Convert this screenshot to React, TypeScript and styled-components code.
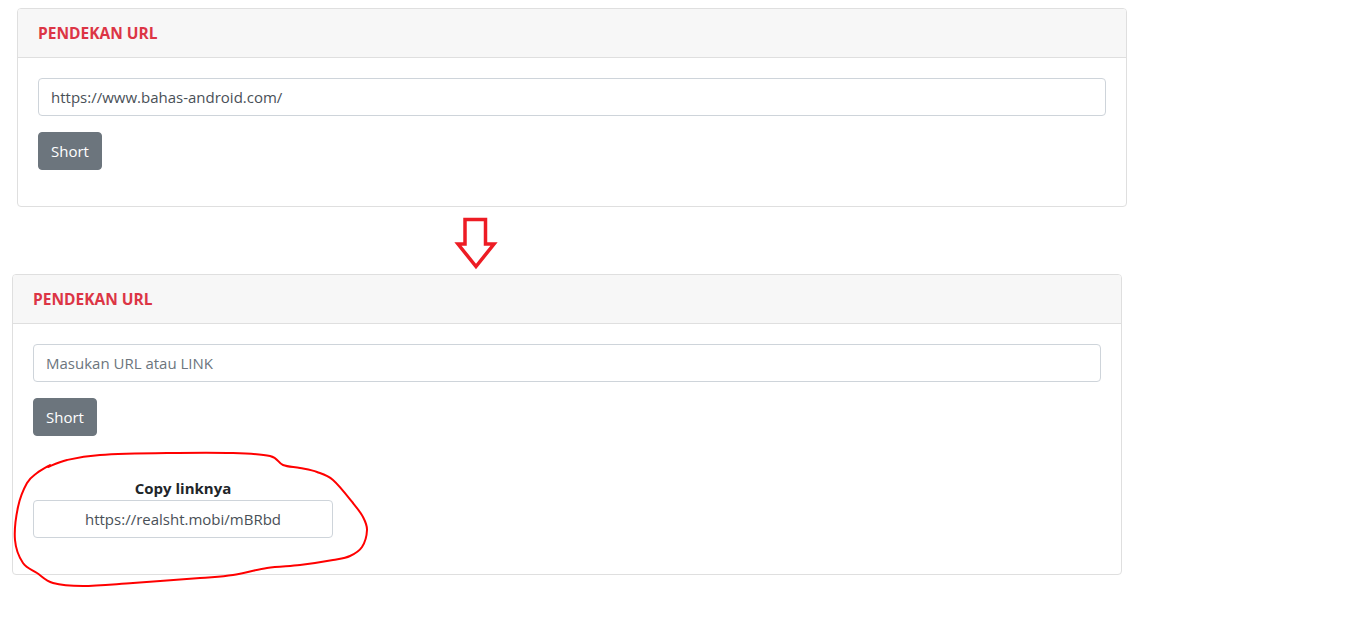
import React from "react";
import styled, { createGlobalStyle } from "styled-components";

const Global = createGlobalStyle`
  html, body { margin: 0; padding: 0; background: #fff; }
  body { font-family: "Open Sans", "Noto Sans", Arial, sans-serif; font-size: 15px; line-height: 1.5; color: #212529; }
  * { box-sizing: border-box; }
`;

const Page = styled.div`
  padding: 8px;
  min-height: 100vh;
  display: flex;
  flex-direction: column;
  align-items: flex-start;
`;

const Card = styled.div<{ $offset: number }>`
  margin-left: ${(p) => p.$offset}px;
  width: 1110px;
  border: 1px solid #dfdfdf;
  border-radius: 4px;
  background: #fff;
  display: flex;
  flex-direction: column;
`;

const CardHeader = styled.div`
  background: #f7f7f7;
  border-bottom: 1px solid #dfdfdf;
  padding: 12px 20px;
  border-radius: 3px 3px 0 0;
`;

const Title = styled.h6`
  margin: 0;
  font-size: 15.5px;
  line-height: 24px;
  font-weight: 700;
  color: #dc3545;
`;

const CardBody = styled.div`
  padding: 20px;
  display: flex;
  flex-direction: column;
  align-items: flex-start;
`;

const Input = styled.input<{ $w?: string; $center?: boolean }>`
  width: ${(p) => p.$w || "100%"};
  height: 38px;
  padding: 6px 12px;
  font: inherit;
  font-size: 15px;
  color: #495057;
  border: 1px solid #ced4da;
  border-radius: 4px;
  background: #fff;
  outline: none;
  text-align: ${(p) => (p.$center ? "center" : "left")};
  &::placeholder { color: #6c757d; opacity: 1; }
`;

const Button = styled.button`
  margin-top: 16px;
  margin-bottom: 16px;
  height: 38px;
  padding: 6px 12px;
  font: inherit;
  font-size: 15px;
  color: #fff;
  background: #6c757d;
  border: 1px solid #6c757d;
  border-radius: 4px;
`;

const ArrowRow = styled.div`
  margin: 9px 0 4px 446px;
  height: 54px;
  display: flex;
`;

const CopyBox = styled.div`
  position: relative;
  margin-top: 24px;
  margin-bottom: 16px;
  width: 300px;
  display: flex;
  flex-direction: column;
  align-items: center;
`;

const CopyLabel = styled.div`
  font-weight: 700;
  font-size: 15px;
  line-height: 24px;
  color: #212529;
`;

const Scribble = styled.svg`
  position: absolute;
  left: -33px;
  top: -36px;
  width: 400px;
  height: 160px;
  overflow: visible;
  pointer-events: none;
`;

const pts: [number, number][] = [
  [50, 25], [37, 33], [27, 43], [18, 67], [15, 100], [23, 123], [37, 133], [53, 143],
  [83, 146], [133, 143], [200, 138], [233, 135], [267, 128], [300, 125], [333, 120],
  [350, 116], [362, 107], [367, 90], [363, 77], [353, 63], [333, 40], [317, 32],
  [300, 28], [283, 25], [270, 16], [233, 13], [167, 13], [100, 15], [67, 20], [48, 27],
];

function smoothPath(p: [number, number][]): string {
  let d = `M${p[0][0]},${p[0][1]}`;
  for (let i = 0; i < p.length - 1; i++) {
    const p0 = p[i - 1] || p[i];
    const p1 = p[i];
    const p2 = p[i + 1];
    const p3 = p[i + 2] || p2;
    const c1x = p1[0] + (p2[0] - p0[0]) / 6;
    const c1y = p1[1] + (p2[1] - p0[1]) / 6;
    const c2x = p2[0] - (p3[0] - p1[0]) / 6;
    const c2y = p2[1] - (p3[1] - p1[1]) / 6;
    d += ` C${c1x.toFixed(1)},${c1y.toFixed(1)} ${c2x.toFixed(1)},${c2y.toFixed(1)} ${p2[0]},${p2[1]}`;
  }
  return d;
}

const scribbleD = smoothPath(pts);

const DownArrow = () => (
  <svg width="44" height="54" viewBox="0 0 44 54">
    <polygon
      points="11,3.5 31.5,3.5 31.5,28 40,28 22,50.5 4,28 11,28"
      fill="none"
      stroke="#ed1c24"
      strokeWidth="3.5"
      strokeLinejoin="miter"
    />
  </svg>
);

export default function App() {
  return (
    <>
      <Global />
      <Page>
        <Card $offset={9}>
          <CardHeader>
            <Title>PENDEKAN URL</Title>
          </CardHeader>
          <CardBody>
            <Input defaultValue="https://www.bahas-android.com/" />
            <Button>Short</Button>
          </CardBody>
        </Card>
        <ArrowRow>
          <DownArrow />
        </ArrowRow>
        <Card $offset={4}>
          <CardHeader>
            <Title>PENDEKAN URL</Title>
          </CardHeader>
          <CardBody>
            <Input placeholder="Masukan URL atau LINK" />
            <Button>Short</Button>
            <CopyBox>
              <CopyLabel>Copy linknya</CopyLabel>
              <Input $w="300px" $center defaultValue="https://realsht.mobi/mBRbd" readOnly />
              <Scribble viewBox="0 0 400 160">
                <path d={scribbleD} fill="none" stroke="#ff0000" strokeWidth="2" strokeLinecap="round" strokeLinejoin="round" />
              </Scribble>
            </CopyBox>
          </CardBody>
        </Card>
      </Page>
    </>
  );
}
